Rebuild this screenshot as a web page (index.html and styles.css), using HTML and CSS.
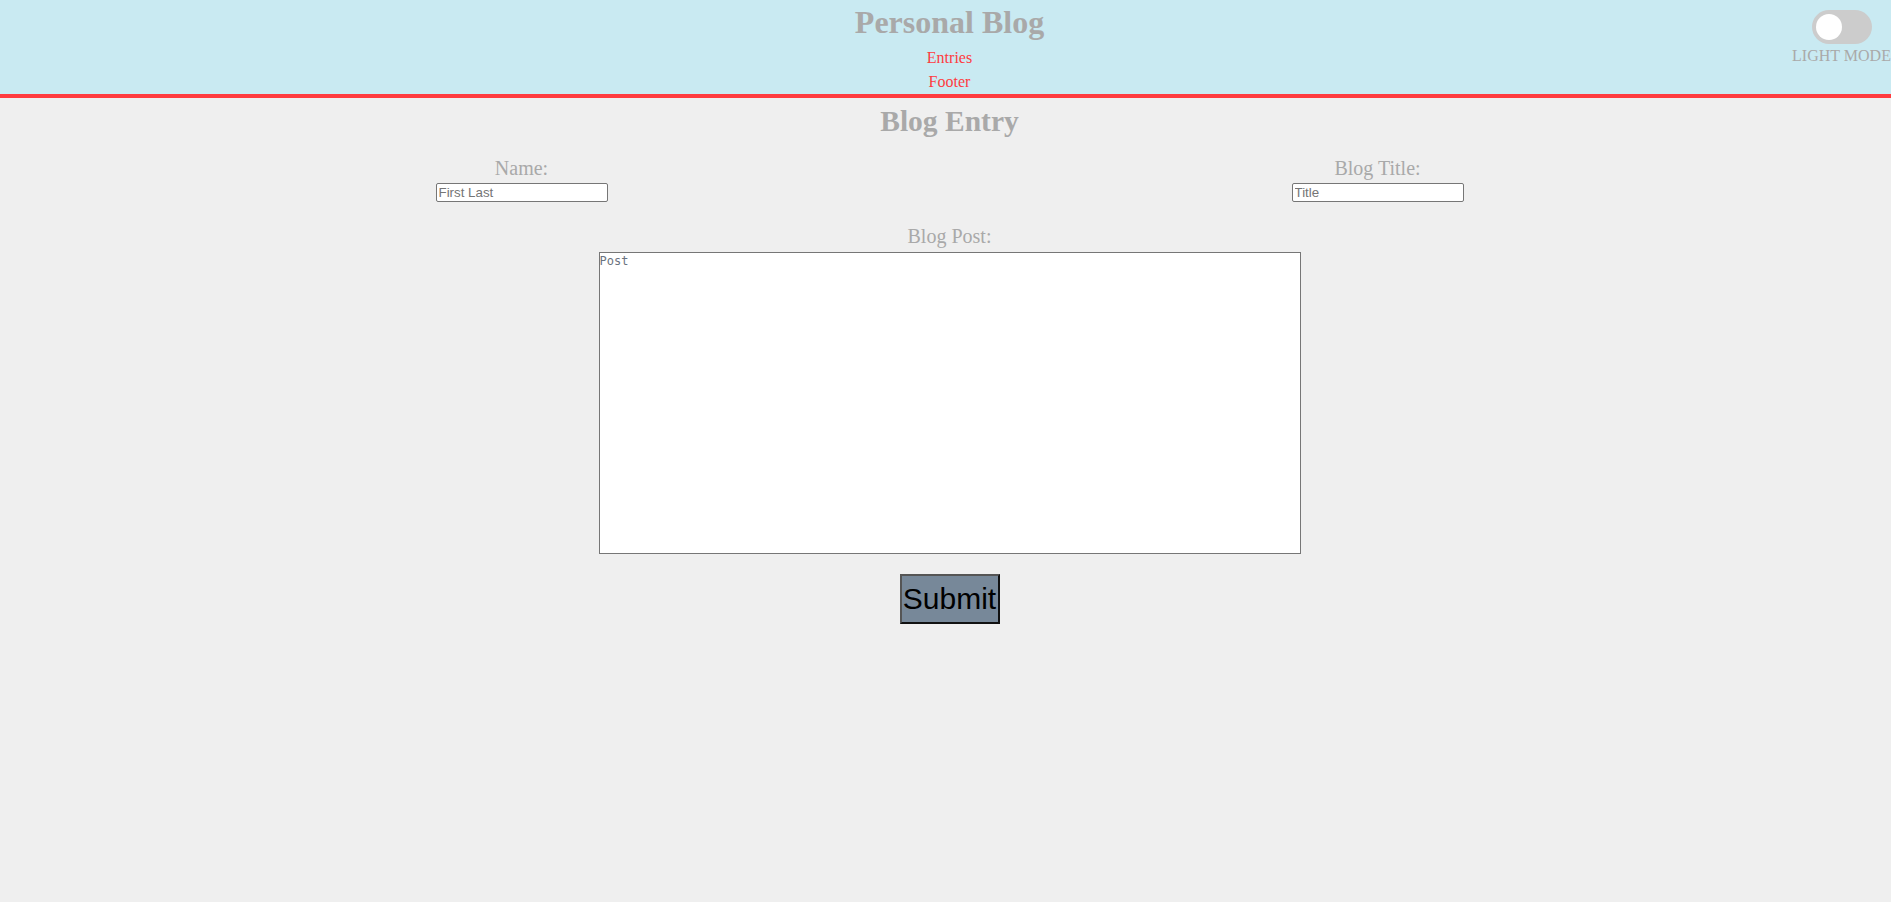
FILE: index.html
```html
<!DOCTYPE html>
<html lang="en">
<head>
<meta charset="utf-8">
<title>Personal Blog</title>
<link rel="stylesheet" href="styles.css">
</head>
<body>
<header class="site-header">
  <h1 class="site-title">Personal Blog</h1>
  <nav class="site-nav">
    <a class="nav-link" href="#">Entries</a>
    <a class="nav-link" href="#">Footer</a>
  </nav>
  <div class="mode-toggle">
    <span class="switch"><span class="knob"></span></span>
    <span class="mode-label">LIGHT MODE</span>
  </div>
</header>
<main class="main">
  <h2 class="entry-title">Blog Entry</h2>
  <form class="entry-form">
    <div class="field-row">
      <div class="field">
        <label class="field-label" for="name">Name:</label>
        <input class="text-input" id="name" type="text" placeholder="First Last">
      </div>
      <div class="field">
        <label class="field-label" for="title">Blog Title:</label>
        <input class="text-input" id="title" type="text" placeholder="Title">
      </div>
    </div>
    <div class="post-field">
      <label class="field-label post-label" for="post">Blog Post:</label>
      <textarea class="post-input" id="post" placeholder="Post"></textarea>
    </div>
    <button class="submit-btn" type="button">Submit</button>
  </form>
</main>
</body>
</html>
```
FILE: styles.css
```css
html, body {
  margin: 0;
  padding: 0;
  background: #efefef;
  overflow: hidden;
}
body {
  font-family: "Liberation Serif", "Times New Roman", serif;
  color: #a9a9a9;
  min-height: 902px;
}
.site-header {
  position: relative;
  background: #c9eaf2;
  border-bottom: 4px solid #ff3b3f;
  padding: 4px 0 1px 8px;
  height: 89px;
  box-sizing: content-box;
  text-align: center;
}
.site-title {
  margin: 0 0 5px;
  font-size: 32px;
  line-height: 37px;
  font-weight: bold;
  color: #a9a9a9;
}
.site-nav {
  display: flex;
  flex-direction: column;
  align-items: center;
}
.nav-link {
  color: #ff3b3f;
  text-decoration: none;
  font-size: 16px;
  line-height: 24px;
}
.mode-toggle {
  position: absolute;
  top: 10px;
  right: 0;
  width: 99px;
  display: flex;
  flex-direction: column;
  align-items: center;
  gap: 3px;
}
.switch {
  position: relative;
  display: block;
  width: 60px;
  height: 34px;
  background: #cccccc;
  border-radius: 17px;
}
.knob {
  position: absolute;
  left: 4px;
  top: 4px;
  width: 26px;
  height: 26px;
  border-radius: 50%;
  background: #ffffff;
}
.mode-label {
  font-size: 16px;
  line-height: 18px;
  white-space: nowrap;
  color: #a9a9a9;
}
.main {
  padding-left: 8px;
  text-align: center;
}
.entry-title {
  margin: 6px 0 19px;
  font-size: 29.5px;
  line-height: 34px;
  font-weight: bold;
  color: #a9a9a9;
}
.entry-form {
  display: flex;
  flex-direction: column;
  align-items: center;
}
.field-row {
  display: grid;
  grid-template-columns: 856px 856px;
  justify-content: center;
  width: 100%;
}
.field {
  display: flex;
  flex-direction: column;
  align-items: center;
}
.field-label {
  display: block;
  font-size: 20px;
  line-height: 23px;
  color: #a9a9a9;
  margin-bottom: 3px;
}
.text-input {
  box-sizing: border-box;
  width: 172px;
  height: 19px;
  margin: 0;
  padding: 1px 2px;
  border: 1px solid #767676;
  border-radius: 2px;
  background: #ffffff;
  font-family: "Liberation Sans", Arial, sans-serif;
  font-size: 13.33px;
  color: #000;
}
.text-input::placeholder {
  color: #757575;
}
.post-field {
  display: flex;
  flex-direction: column;
  align-items: center;
  margin-top: 23px;
}
.post-label {
  margin-bottom: 4px;
}
.post-input {
  box-sizing: content-box;
  width: 700px;
  height: 300px;
  margin: 0;
  padding: 0;
  border: 1px solid #767676;
  border-radius: 0;
  background: #ffffff;
  resize: none;
  font-family: "DejaVu Sans Mono", "Liberation Mono", monospace;
  font-size: 12px;
  line-height: 17px;
  display: block;
}
.post-input::placeholder {
  color: #6a7380;
}
.submit-btn {
  margin-top: 20px;
  box-sizing: border-box;
  width: 100px;
  height: 50px;
  padding: 0;
  background: #778899;
  border: 2px solid;
  border-color: #555 #111 #111 #555;
  font-family: "Liberation Sans", Arial, sans-serif;
  font-size: 30px;
  color: #000;
  display: flex;
  align-items: center;
  justify-content: center;
  white-space: nowrap;
  overflow: visible;
}
```
